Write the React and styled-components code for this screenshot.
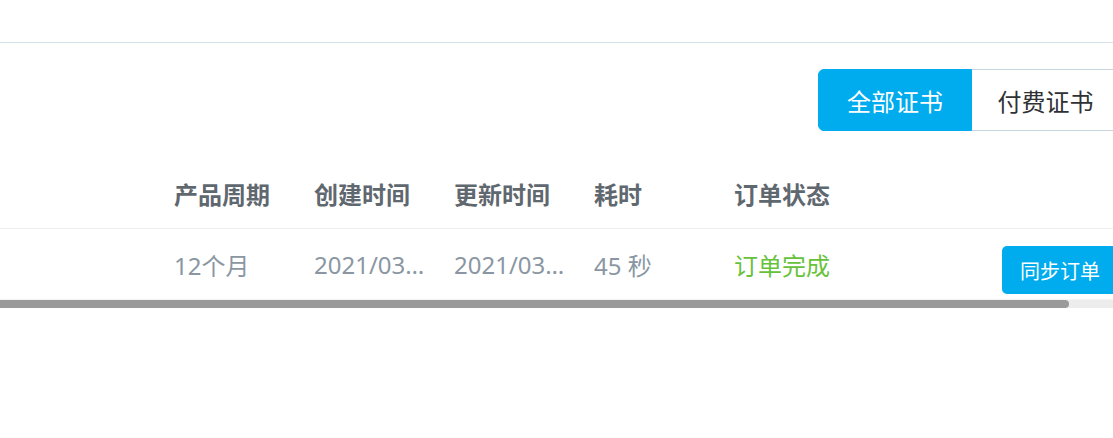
import styled, { createGlobalStyle } from "styled-components";

const GlobalStyle = createGlobalStyle`
  html, body {
    margin: 0;
    padding: 0;
    background: #fff;
    overflow: hidden;
  }
  body {
    font-family: "Noto Sans", "Noto Sans CJK SC", sans-serif;
  }
`;

const Page = styled.div`
  width: 100%;
  overflow: hidden;
`;

const TopBar = styled.div`
  height: 42px;
  border-bottom: 1px solid #d4e3ea;
`;

const Toolbar = styled.div`
  display: flex;
  justify-content: flex-end;
  padding: 26px 0 28px;
`;

const Tabs = styled.div`
  display: flex;
  margin-right: -13px;
`;

const Tab = styled.button`
  width: 154px;
  height: 62px;
  box-sizing: border-box;
  font-family: inherit;
  font-size: 24px;
  cursor: pointer;
  border: 1px solid ${(p) => (p.active ? "#00acee" : "#c6d4dd")};
  border-left-width: ${(p) => (p.active ? "1px" : "0")};
  background: ${(p) => (p.active ? "#00acee" : "#fff")};
  color: ${(p) => (p.active ? "#fff" : "#303133")};
  border-radius: ${(p) => (p.active ? "6px 0 0 6px" : "0 6px 6px 0")};
  padding: 0 ${(p) => (p.active ? "0" : "6px")} 0 0;
`;

const TableWrap = styled.div`
  width: 100%;
  overflow: hidden;
`;

const Grid = styled.div`
  display: grid;
  grid-template-columns: 164px repeat(5, 140px) 128px 160px;
  width: 1292px;
`;

const HeadCell = styled.div`
  height: 70px;
  box-sizing: border-box;
  display: flex;
  align-items: center;
  padding: 0 16px 0 10px;
  font-size: 24px;
  font-weight: 700;
  color: #5f676f;
  border-bottom: 1px solid #eeeeee;
`;

const Cell = styled.div`
  height: 70px;
  box-sizing: border-box;
  display: flex;
  align-items: center;
  padding: 0 16px 0 10px;
  font-size: 24px;
  color: ${(p) => p.color || "#8a97a3"};
  min-width: 0;
`;

const Clip = styled.span`
  white-space: nowrap;
  overflow: hidden;
  text-overflow: ellipsis;
`;

const SyncButton = styled.button`
  margin-top: 12px;
  height: 48px;
  padding: 0 18px;
  border: none;
  border-radius: 5px;
  background: #00acee;
  color: #fff;
  font-family: inherit;
  font-size: 20px;
  white-space: nowrap;
  cursor: pointer;
`;

const ScrollTrack = styled.div`
  height: 8px;
  background: #ececec;
  border-top: 1px solid #f4f4f4;
`;

const ScrollThumb = styled.div`
  height: 100%;
  width: 1069px;
  background: #9a9a9a;
  border-radius: 0 4px 4px 0;
`;

const columns = ["", "产品周期", "创建时间", "更新时间", "耗时", "订单状态", "", ""];

const App = () => {
  return (
    <Page>
      <GlobalStyle />
      <TopBar />
      <Toolbar>
        <Tabs>
          <Tab active>全部证书</Tab>
          <Tab>付费证书</Tab>
        </Tabs>
      </Toolbar>
      <TableWrap>
        <Grid>
          {columns.map((c, i) => (
            <HeadCell key={i}>{c}</HeadCell>
          ))}
          <Cell />
          <Cell>12个月</Cell>
          <Cell><Clip>2021/03/15 10:22:31</Clip></Cell>
          <Cell><Clip>2021/03/15 10:23:16</Clip></Cell>
          <Cell>45 秒</Cell>
          <Cell color="#67c23a">订单完成</Cell>
          <Cell />
          <Cell>
            <SyncButton>同步订单</SyncButton>
          </Cell>
        </Grid>
      </TableWrap>
      <ScrollTrack>
        <ScrollThumb />
      </ScrollTrack>
    </Page>
  );
};

export default App;
